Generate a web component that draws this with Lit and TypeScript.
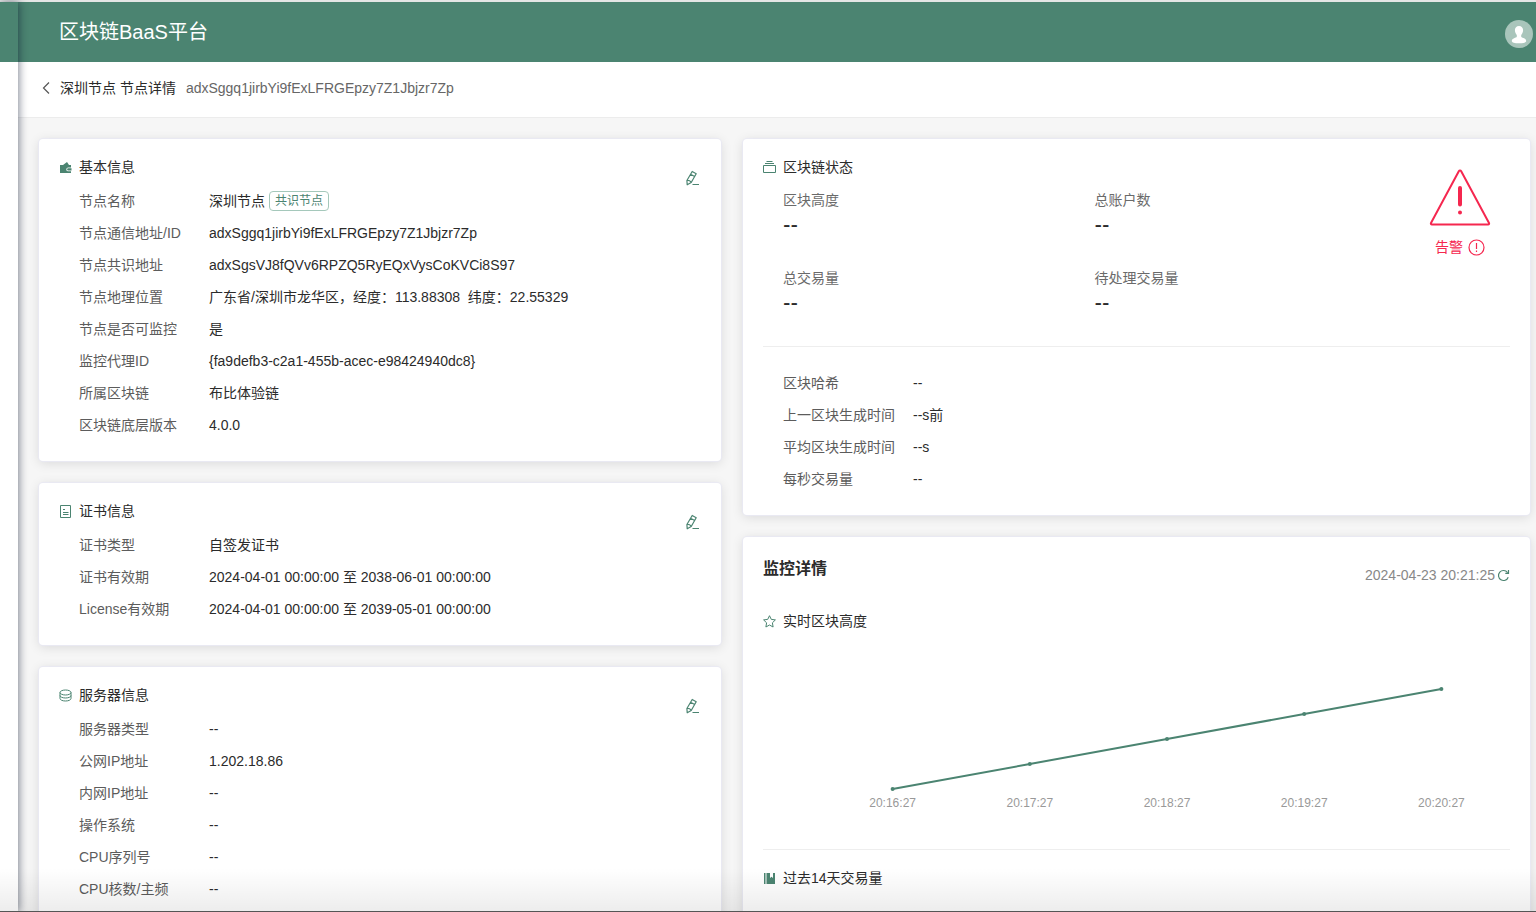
import { LitElement, html, svg, css, nothing, TemplateResult } from "lit";
import { customElement, property } from "lit/decorators.js";

type Row = [label: string, value: string, tag?: string];

const basicRows: Row[] = [
  ["节点名称", "深圳节点", "共识节点"],
  ["节点通信地址/ID", "adxSggq1jirbYi9fExLFRGEpzy7Z1Jbjzr7Zp"],
  ["节点共识地址", "adxSgsVJ8fQVv6RPZQ5RyEQxVysCoKVCi8S97"],
  ["节点地理位置", "广东省/深圳市龙华区，经度：113.88308  纬度：22.55329"],
  ["节点是否可监控", "是"],
  ["监控代理ID", "{fa9defb3-c2a1-455b-acec-e98424940dc8}"],
  ["所属区块链", "布比体验链"],
  ["区块链底层版本", "4.0.0"],
];

const certRows: Row[] = [
  ["证书类型", "自签发证书"],
  ["证书有效期", "2024-04-01 00:00:00 至 2038-06-01 00:00:00"],
  ["License有效期", "2024-04-01 00:00:00 至 2039-05-01 00:00:00"],
];

const serverRows: Row[] = [
  ["服务器类型", "--"],
  ["公网IP地址", "1.202.18.86"],
  ["内网IP地址", "--"],
  ["操作系统", "--"],
  ["CPU序列号", "--"],
  ["CPU核数/主频", "--"],
];

const chainStats = [
  ["区块高度", "--"],
  ["总账户数", "--"],
  ["总交易量", "--"],
  ["待处理交易量", "--"],
];

const blockRows: Row[] = [
  ["区块哈希", "--"],
  ["上一区块生成时间", "--s前"],
  ["平均区块生成时间", "--s"],
  ["每秒交易量", "--"],
];

const heights = [
  { time: "20:16:27", level: 0 },
  { time: "20:17:27", level: 25 },
  { time: "20:18:27", level: 50 },
  { time: "20:19:27", level: 75 },
  { time: "20:20:27", level: 100 },
];

const glyphs: Record<string, TemplateResult> = {
  wallet: svg`<path fill="currentColor" fill-rule="evenodd" d="M1 4h3l4-3 2 3h2v2.500H9.200a1.900 1.900 0 0 0 0 3.800H12V12H1zM9.200 7.300H12.500v2.200H9.200a1.100 1.100 0 0 1 0-2.200z"/>`,
  cert: svg`<g fill="none" stroke="currentColor"><path d="M1.500 .5h10v12h-10z"/><path d="M4 4.500h2M4 7.500h5.500M4 9.500h5.500"/></g>`,
  server: svg`<g fill="none" stroke="currentColor"><ellipse cx="6.500" cy="3.500" rx="5.500" ry="2.500"/><path d="M1 3.500v6c0 1.400 2.400 2.500 5.500 2.500s5.500-1.100 5.500-2.500v-6M1 6.500c0 1.400 2.400 2.500 5.500 2.500s5.500-1.100 5.500-2.500"/></g>`,
  blocks: svg`<g fill="none" stroke="currentColor"><path d="M.5 4.500h12v7H.5zM2 2.500h9M3.500 .5h6"/></g>`,
  star: svg`<path fill="none" stroke="currentColor" stroke-linejoin="round" d="M6.500 .7l1.800 3.700 4.100.5-3 2.900.7 4.200-3.600-2-3.600 2 .7-4.200-3-2.900 4.100-.5z"/>`,
  book: svg`<path fill="currentColor" d="M1 1h1.500v11H1zM3.500 1H7v5l1.500-1.300L10 6V1h2v11H3.500z"/>`,
};

@customElement("line-icon")
class LineIcon extends LitElement {
  static styles = css`
    :host { display: block; width: 13px; height: 13px; color: #4b8471; }
    .glyph { display: block; width: 13px; height: 13px; }
  `;
  @property() name = "";
  render() {
    return html`<svg class="glyph" viewBox="0 0 13 13" aria-hidden="true">${glyphs[this.name]}</svg>`;
  }
}

@customElement("app-root")
class AppRoot extends LitElement {
  static styles = css`
    :host {
      display: block;
      height: 100vh;
      overflow: hidden;
      position: relative;
      background: #f6f6f6;
      color: #333;
      font: 14px/20px "Liberation Sans", "Noto Sans CJK SC", sans-serif;
    }
    * { box-sizing: border-box; }
    h1, h2, h3, dl, dd, dt { margin: 0; font-weight: 400; font-size: inherit; }
    button { border: 0; padding: 0; background: none; color: #4b8471; font: inherit; cursor: pointer; }
    svg { display: block; }

    .page { display: flex; height: 100%; border-top: 2px solid #e4e6e5; }
    .rail {
      flex: none;
      width: 18px;
      background: #fff;
      box-shadow: 1px 0 8px rgba(0, 14, 40, 0.5);
      z-index: 1;
    }
    .rail-top { height: 60px; background: #4b8471; }
    .main { flex: 1; min-width: 0; }

    .header {
      height: 60px;
      padding: 0 3px 0 41px;
      display: flex;
      align-items: center;
      justify-content: space-between;
      background: #4b8471;
      color: #fff;
    }
    .brand { font-size: 20px; line-height: 28px; }
    .avatar { margin-top: 4px; border-radius: 50%; }

    .crumb {
      height: 56px;
      padding: 0 22px 3px;
      display: flex;
      align-items: center;
      background: #fff;
      border-bottom: 1px solid #ececec;
      color: #2b2b2b;
    }
    .back { display: block; margin-right: 8px; color: #555; }
    .crumb-id { margin-left: 10px; color: #666; }

    .content {
      display: grid;
      grid-template-columns: 13fr 15fr;
      gap: 22px;
      padding: 21px 6px 0 21px;
    }
    .column { display: flex; flex-direction: column; gap: 22px; min-width: 0; }
    .card {
      position: relative;
      padding: 16px 20px 20px;
      background: #fff;
      border-radius: 4px;
      box-shadow: 0 0 1px 1px #e9e9f3, 0 2px 12px rgba(0, 0, 0, 0.12);
    }
    .section { display: flex; align-items: center; gap: 7px; height: 24px; color: #2b2b2b; }
    .edit { position: absolute; top: 31px; right: 21px; }

    .rows { margin-top: 6px; padding-left: 20px; }
    .row { display: flex; align-items: center; height: 32px; }
    .term { width: 130px; color: #5c5c5c; }
    .value { display: flex; align-items: center; gap: 4px; color: #2b2b2b; white-space: pre; }
    .tag {
      height: 20px;
      padding: 0 5px;
      border: 1px solid #a5c8bb;
      border-radius: 4px;
      color: #4b8471;
      font-size: 12px;
      line-height: 18px;
    }

    .status { display: flex; margin-top: 6px; padding-left: 20px; gap: 4px; }
    .stats { flex: 1; display: grid; grid-template-columns: 1fr 1fr; }
    .stat { height: 78px; }
    .stat-name { line-height: 30px; color: #6a6a6a; }
    .stat-value { font-family: Inter, sans-serif; font-size: 16px; font-weight: 700; line-height: 20px; color: #2b2b2b; }
    .alarm {
      width: 100px;
      margin-top: -18px;
      display: flex;
      flex-direction: column;
      align-items: center;
      gap: 10px;
      color: #f5274f;
    }
    .alarm-text { display: flex; align-items: center; gap: 5px; }
    .rule { height: 1px; background: #eee; }
    .after-stats { margin: 5px 0 20px; }

    .monitor-head { display: flex; justify-content: space-between; height: 45px; }
    .monitor-title { font-size: 16px; font-weight: 700; line-height: 32px; color: #2b2b2b; }
    .stamp { display: flex; align-items: center; gap: 2px; height: 44px; color: #888; }
    .series { margin-top: 11px; }
    .chart { margin: 56px 0 34px; padding-left: 61px; }
    .plot { width: 100%; height: 102px; overflow: visible; }
    .ticks {
      display: grid;
      grid-template-columns: repeat(5, 1fr);
      text-align: center;
      color: #999;
      font-size: 12px;
      line-height: 24px;
    }
    .next { margin-top: 16px; }
    .history { height: 200px; }

    .fade {
      position: absolute;
      left: 0;
      right: 0;
      bottom: 0;
      height: 44px;
      border-bottom: 1px solid #555;
      background: linear-gradient(rgba(0, 0, 0, 0), rgba(0, 0, 0, 0.07));
      pointer-events: none;
      z-index: 2;
    }
  `;

  private rows(rows: Row[]) {
    return html`<dl class="rows">
      ${rows.map(([label, value, tag]) => html`<div class="row">
        <dt class="term">${label}</dt>
        <dd class="value">${value}${tag ? html`<span class="tag">${tag}</span>` : nothing}</dd>
      </div>`)}
    </dl>`;
  }

  private section(icon: string, title: string) {
    return html`<h2 class="section"><line-icon name=${icon}></line-icon>${title}</h2>`;
  }

  private infoCard(icon: string, title: string, rows: Row[]) {
    return html`<section class="card">
      ${this.section(icon, title)}
      <button class="edit" aria-label="编辑">
        <svg width="15" height="16" viewBox="0 0 15 16" fill="none" stroke="currentColor" stroke-width="1.200" stroke-linejoin="round">
          <path d="M7.200 1.500l4 2.200-5 8.800-4 2.300-.3-4.300zM5.600 4.300l4 2.300M2 10.500c1.700-.5 3.700.6 4.200 2M7.500 14.500H14"/>
        </svg>
      </button>
      ${this.rows(rows)}
    </section>`;
  }

  render() {
    const points = heights.map((h, i) => ({ x: 50 + i * 100, y: 100 - h.level }));
    return html`
      <div class="page">
        <aside class="rail"><div class="rail-top"></div></aside>
        <div class="main">
          <header class="header">
            <h1 class="brand">区块链BaaS平台</h1>
            <button class="avatar" aria-label="用户">
              <svg width="28" height="28" viewBox="0 0 28 28">
                <circle cx="14" cy="14" r="14" fill="#a9c5bb"/>
                <path fill="#fff" d="M14 6c2.500 0 4.100 1.700 4.100 4.100 0 1.900-.8 3.800-1.900 4.900v1.700c.5 1.100 5 1.300 5 4.300 0 1.500-3 2.300-7.200 2.300S6.800 22.500 6.800 21c0-3 4.500-3.200 5-4.300V15c-1.100-1.100-1.900-3-1.900-4.900C9.900 7.700 11.500 6 14 6z"/>
              </svg>
            </button>
          </header>
          <nav class="crumb">
            <a class="back" href="#" aria-label="返回">
              <svg width="12" height="14" viewBox="0 0 12 14" fill="none" stroke="currentColor" stroke-width="1.200"><path d="M9 1.500L3.500 7 9 12.500"/></svg>
            </a>
            <span>深圳节点 节点详情</span>
            <span class="crumb-id">adxSggq1jirbYi9fExLFRGEpzy7Z1Jbjzr7Zp</span>
          </nav>
          <main class="content">
            <div class="column">
              ${this.infoCard("wallet", "基本信息", basicRows)}
              ${this.infoCard("cert", "证书信息", certRows)}
              ${this.infoCard("server", "服务器信息", serverRows)}
            </div>
            <div class="column">
              <section class="card">
                ${this.section("blocks", "区块链状态")}
                <div class="status">
                  <dl class="stats">
                    ${chainStats.map(([name, value]) => html`<div class="stat">
                      <dt class="stat-name">${name}</dt>
                      <dd class="stat-value">${value}</dd>
                    </div>`)}
                  </dl>
                  <div class="alarm">
                    <svg width="62" height="60" viewBox="0 0 62 60" fill="none" stroke="currentColor" stroke-linejoin="round" stroke-linecap="round">
                      <path stroke-width="2" d="M31 3.500c-.5 0-.9.200-1.200.700L2 56c-.4.800 0 1.500.9 1.500h56.200c.9 0 1.300-.7.900-1.500L32.200 4.200c-.3-.5-.7-.7-1.200-.7z"/>
                      <path stroke-width="4" d="M31 21v16.500M31 45.500v.1"/>
                    </svg>
                    <div class="alarm-text">告警
                      <svg width="17" height="17" viewBox="0 0 17 17" fill="none" stroke="currentColor" stroke-width="1.200"><circle cx="8.500" cy="8.500" r="7.500"/><path d="M8.500 4v6M8.500 11.500v1.500"/></svg>
                    </div>
                  </div>
                </div>
                <div class="rule after-stats"></div>
                ${this.rows(blockRows)}
              </section>
              <section class="card">
                <div class="monitor-head">
                  <h2 class="monitor-title">监控详情</h2>
                  <div class="stamp">2024-04-23 20:21:25
                    <button aria-label="刷新">
                      <svg width="13" height="13" viewBox="0 0 13 13" fill="none" stroke="currentColor" stroke-width="1.200"><path d="M11.200 8.200A5 5 0 1 1 10.500 3.500M11.500 1v3.300H8.300"/></svg>
                    </button>
                  </div>
                </div>
                <div class="series">${this.section("star", "实时区块高度")}</div>
                <div class="chart">
                  <svg class="plot" viewBox="0 0 500 102" preserveAspectRatio="none" fill="none" stroke="#4b8471" stroke-linecap="round" stroke-linejoin="round">
                    <polyline vector-effect="non-scaling-stroke" stroke-width="2" points=${points.map((p) => `${p.x},${p.y}`).join(" ")}/>
                    ${points.map((p) => svg`<path vector-effect="non-scaling-stroke" stroke-width="4" d="M${p.x} ${p.y}h.01"/>`)}
                  </svg>
                  <div class="ticks">${heights.map((h) => html`<span>${h.time}</span>`)}</div>
                </div>
                <div class="rule"></div>
                <div class="next">${this.section("book", "过去14天交易量")}</div>
                <div class="history"></div>
              </section>
            </div>
          </main>
        </div>
      </div>
      <div class="fade"></div>
    `;
  }
}
